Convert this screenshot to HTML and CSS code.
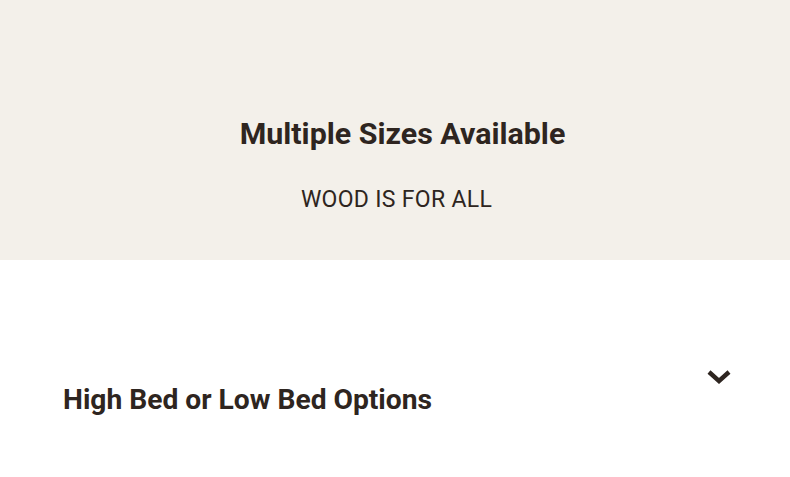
FILE: index.html
```html
<!DOCTYPE html>
<html lang="en">
<head>
    <meta charset="UTF-8">
    <meta name="viewport" content="width=device-width, initial-scale=1.0">
    <title>Multiple Sizes Available</title>
    <link rel="stylesheet" href="styles.css">
</head>
<body>
    <section class="hero">
        <h1 class="hero-title">Multiple Sizes Available</h1>
        <p class="hero-sub">WOOD IS FOR ALL</p>
    </section>

    <section class="faq">
        <div class="faq-item">
            <h2 class="faq-title">High Bed or Low Bed Options</h2>
            <button class="faq-toggle" aria-label="Toggle">
                <svg width="24" height="14" viewBox="0 0 24 14">
                    <path d="M2 2 L12 11 L22 2" fill="none" stroke="#2e2520" stroke-width="4.4"/>
                </svg>
            </button>
        </div>
    </section>
</body>
</html>
```

FILE: styles.css
```css
body {
    font-family: Roboto, "Liberation Sans", sans-serif;
    color: #2e2520;
    background-color: #fff;
    margin: 0;
    padding: 0;
}
.hero {
    background-color: #f3f0ea;
    height: 260px;
    box-sizing: border-box;
    padding-top: 114px;
    text-align: center;
}
.hero-title {
    margin: 0;
    padding-left: 15px;
    font-size: 30.4px;
    font-weight: 700;
    line-height: 40px;
}
.hero-sub {
    margin: 33px 0 0;
    padding-left: 3px;
    font-size: 23px;
    font-weight: 400;
    letter-spacing: 0.3px;
    line-height: 26px;
}
.faq {
    padding: 110px 59px 0 63px;
}
.faq-item {
    display: flex;
    justify-content: space-between;
    align-items: flex-start;
}
.faq-title {
    margin: 0;
    padding-top: 12px;
    font-size: 28.2px;
    font-weight: 700;
    line-height: 36px;
}
.faq-toggle {
    background: none;
    border: none;
    padding: 0;
    cursor: pointer;
    display: flex;
}
```
